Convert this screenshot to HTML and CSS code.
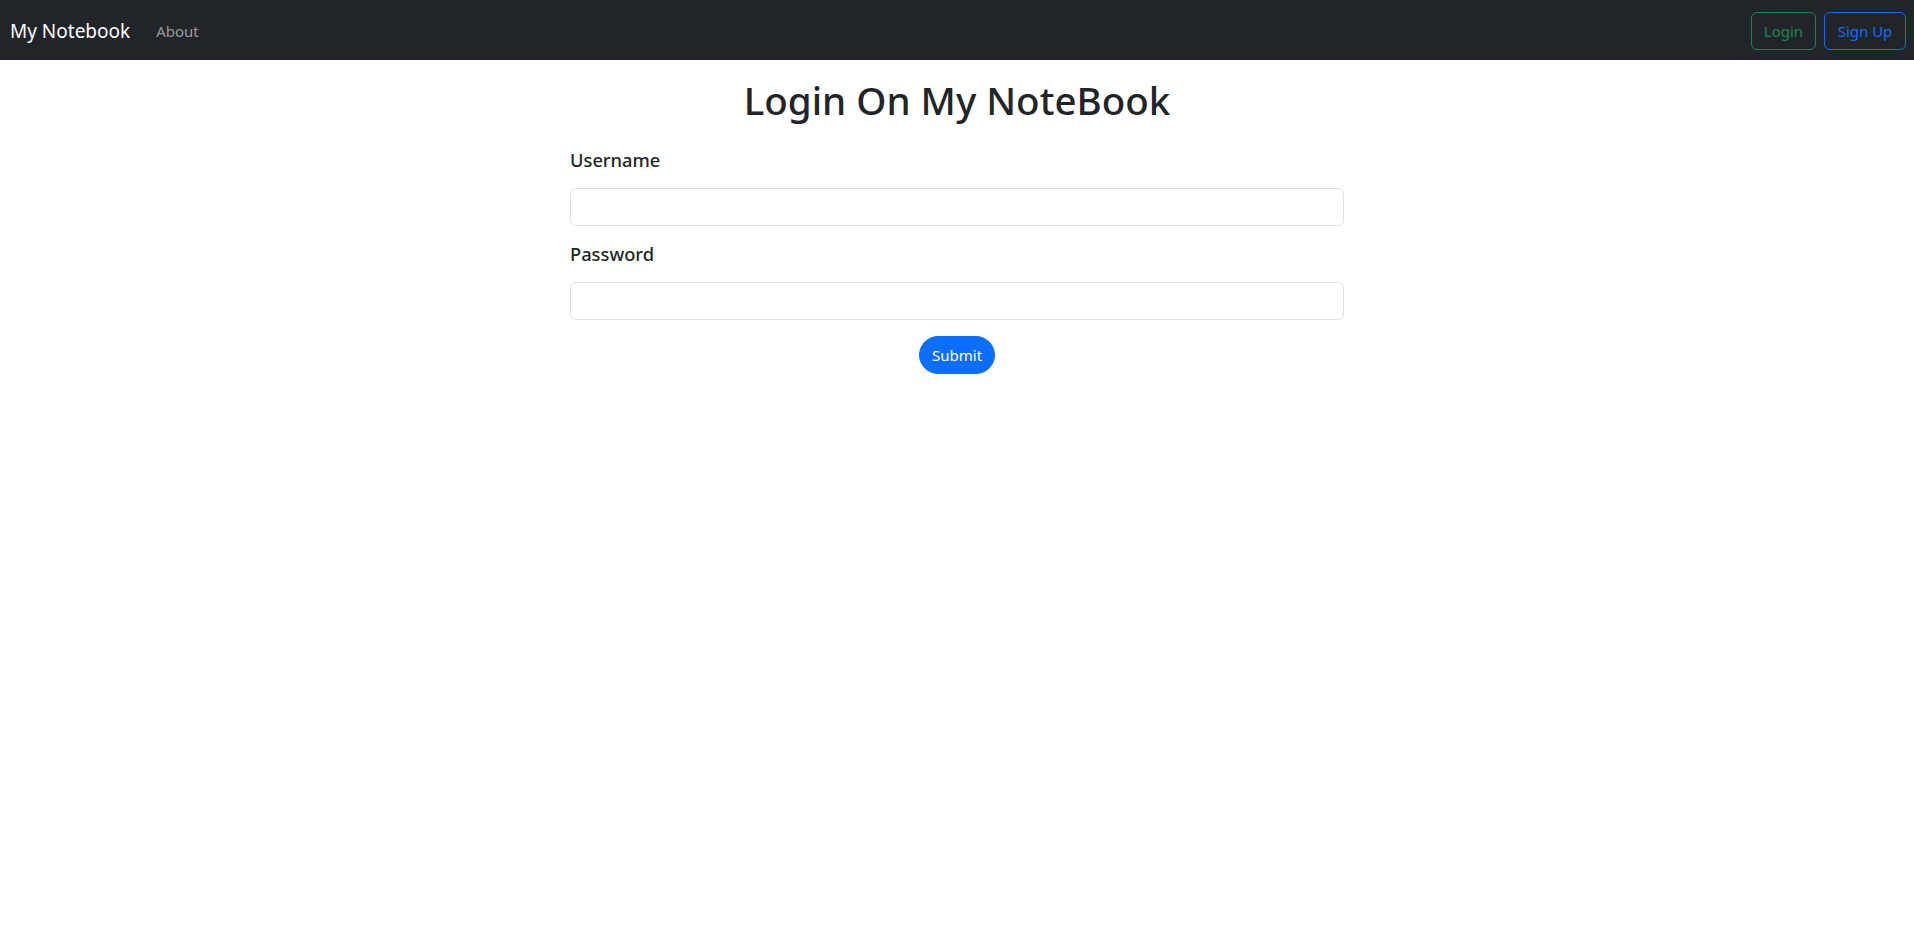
FILE: index.html
```html
<!DOCTYPE html>
<html lang="en">
<head>
<meta charset="utf-8">
<title>My Notebook</title>
<link rel="stylesheet" href="styles.css">
</head>
<body>
<nav class="navbar">
  <div class="nav-left">
    <a class="brand" href="#">My Notebook</a>
    <a class="nav-link" href="#">About</a>
  </div>
  <div class="nav-right">
    <a class="btn btn-outline-success" href="#">Login</a>
    <a class="btn btn-outline-primary" href="#">Sign Up</a>
  </div>
</nav>
<main class="page">
  <h1 class="title">Login On My NoteBook</h1>
  <form class="login-form">
    <div class="field">
      <label class="field-label" for="username">Username</label>
      <input class="form-control" id="username" type="text">
    </div>
    <div class="field">
      <label class="field-label" for="password">Password</label>
      <input class="form-control" id="password" type="password">
    </div>
    <div class="actions">
      <button class="btn-submit" type="submit">Submit</button>
    </div>
  </form>
</main>
</body>
</html>
```

FILE: styles.css
```css
* { box-sizing: border-box; }
html, body {
  margin: 0;
  padding: 0;
  background: #fff;
  color: #212529;
  font-family: "Noto Sans", "Open Sans", sans-serif;
  font-size: 16px;
  line-height: 1.5;
}
a { text-decoration: none; }

.navbar {
  height: 60px;
  background: #212529;
  display: flex;
  align-items: center;
  justify-content: space-between;
  padding: 2px 8px 0 10px;
}
.nav-left {
  display: flex;
  align-items: center;
  gap: 26px;
}
.brand {
  color: #fff;
  font-size: 19px;
  line-height: 30px;
}
.nav-link {
  color: rgba(255, 255, 255, 0.55);
  font-size: 15px;
}
.nav-right {
  display: flex;
  align-items: center;
  gap: 8px;
}
.btn {
  display: inline-flex;
  align-items: center;
  justify-content: center;
  height: 38px;
  padding: 0 11px;
  border: 1px solid;
  border-radius: 6px;
  font-size: 15px;
  background: transparent;
}
.btn-outline-success { color: #198754; border-color: #198754; width: 65px; }
.btn-outline-primary { color: #0d6efd; border-color: #0d6efd; width: 82px; }

.page {
  width: 774px;
  margin: 0 auto;
}
.title {
  margin: 16px 0 0;
  text-align: center;
  font-size: 38.5px;
  font-weight: 500;
  line-height: 48px;
}
.login-form {
  padding-top: 24px;
}
.field {
  margin-bottom: 16px;
}
.field-label {
  display: block;
  font-size: 18.3px;
  font-weight: 500;
  line-height: 24px;
  margin-bottom: 16px;
}
.form-control {
  display: block;
  width: 100%;
  height: 38px;
  border: 1px solid #dee2e6;
  border-radius: 6px;
  padding: 6px 12px;
  font: inherit;
  background: #fff;
}
.actions {
  display: flex;
  justify-content: center;
}
.btn-submit {
  height: 38px;
  width: 76px;
  border: 1px solid #0d6efd;
  background: #0d6efd;
  color: #fff;
  border-radius: 50rem;
  font-family: inherit;
  font-size: 15px;
  padding: 0 12px;
}
```
